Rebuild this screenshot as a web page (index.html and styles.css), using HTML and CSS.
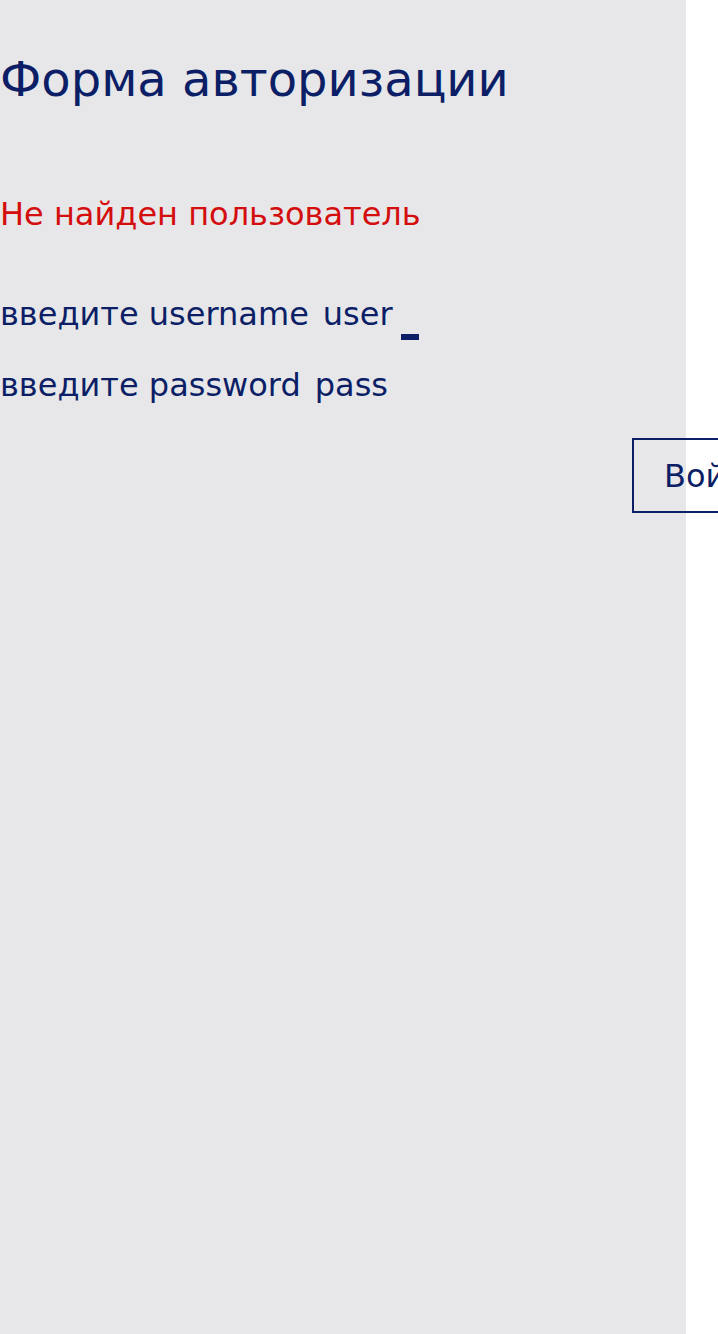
FILE: index.html
```html
<!DOCTYPE html>
<html lang="ru">
<head>
<meta charset="utf-8">
<title>Форма авторизации</title>
<link rel="stylesheet" href="styles.css">
</head>
<body>
<main class="panel">
  <h1 class="title">Форма авторизации</h1>
  <p class="error">Не найден пользователь</p>
  <div class="field">
    <span class="label">введите username</span>
    <span class="value">user</span>
    <span class="caret"></span>
  </div>
  <div class="field field-second">
    <span class="label">введите password</span>
    <span class="value">pass</span>
  </div>
  <div class="actions">
    <button class="btn" type="button">Войти</button>
  </div>
</main>
</body>
</html>
```
FILE: styles.css
```css
body {
  margin: 0;
  background: #ffffff;
  font-family: "DejaVu Sans", "Open Sans", sans-serif;
  color: #0c1f66;
}
.panel {
  width: 686px;
  min-height: 1334px;
  background: #e7e7ea;
  padding-top: 51px;
  box-sizing: border-box;
  overflow: visible;
}
.title {
  margin: 0;
  font-size: 48px;
  font-weight: 400;
  line-height: 56px;
}
.error {
  margin: 87px 0 0;
  color: #d40d0d;
  font-size: 32px;
  line-height: 40px;
}
.field {
  display: flex;
  align-items: baseline;
  font-size: 32px;
  line-height: 40px;
  margin-top: 60px;
}
.field-second {
  margin-top: 31px;
}
.label {
  margin-right: 14px;
}
.caret {
  align-self: flex-end;
  width: 18px;
  height: 6px;
  margin: 0 0 -6px 8px;
  background: #0c1f66;
}
.actions {
  margin-top: 33px;
  padding-left: 632px;
  white-space: nowrap;
}
.btn {
  width: 190px;
  height: 75px;
  border: 2px solid #0c1f66;
  border-radius: 0;
  background: transparent;
  color: #0c1f66;
  font-family: inherit;
  font-size: 32px;
  line-height: 40px;
  text-align: left;
  padding: 0 0 0 30px;
  white-space: nowrap;
}
```
